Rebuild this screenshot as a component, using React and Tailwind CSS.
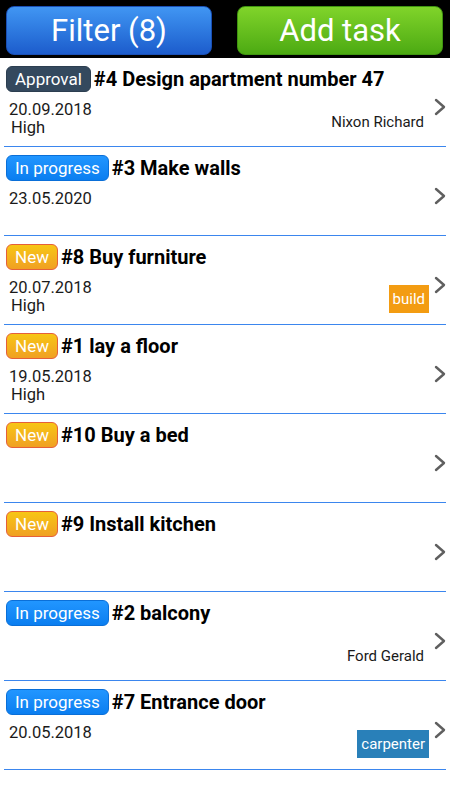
import React from 'react';

const tasks = [
  { id: 4, title: 'Design apartment number 47', status: 'Approval', date: '20.09.2018', priority: 'High', person: 'Nixon Richard' },
  { id: 3, title: 'Make walls', status: 'In progress', date: '23.05.2020' },
  { id: 8, title: 'Buy furniture', status: 'New', date: '20.07.2018', priority: 'High', tag: 'build' },
  { id: 1, title: 'lay a floor', status: 'New', date: '19.05.2018', priority: 'High' },
  { id: 10, title: 'Buy a bed', status: 'New' },
  { id: 9, title: 'Install kitchen', status: 'New' },
  { id: 2, title: 'balcony', status: 'In progress', person: 'Ford Gerald' },
  { id: 7, title: 'Entrance door', status: 'In progress', date: '20.05.2018', tag: 'carpenter' },
];

const badgeStyles = {
  Approval: 'bg-[#34495e] border border-[#2c3e50]',
  'In progress': 'bg-gradient-to-b from-[#2196ff] to-[#0a7ef0] border border-[#0a6fd8]',
  New: 'bg-gradient-to-b from-[#f7c614] to-[#f0a022] border border-[#e5603a]',
};

const tagStyles = {
  build: 'bg-[#f39c12]',
  carpenter: 'bg-[#2980b9]',
};

const Chevron = () => (
  <svg width="12" height="18" viewBox="0 0 12 18" fill="none">
    <path d="M2 2 L10 9 L2 16" stroke="#5f5f5f" strokeWidth="2.4" strokeLinecap="round" strokeLinejoin="round" />
  </svg>
);

const TaskRow = ({ task }) => (
  <div className="flex h-[89px] border-b border-[#3b86ee]">
    <div className="flex-1 flex flex-col pt-[8px] pl-[2px]">
      <div className="flex items-center h-[26px]">
        <span className={`${badgeStyles[task.status]} h-[26px] px-[8px] rounded-[6px] text-[17px] leading-none text-white flex items-center`}>
          {task.status}
        </span>
        <span className="ml-[3px] text-[20px] font-bold leading-none text-black">
          #{task.id} {task.title}
        </span>
      </div>
      <div className="flex justify-between items-start mt-[9px]">
        <div className="pl-[3px] text-[16.5px] leading-[18px] text-[#1a1a1a]">
          {task.date && <div>{task.date}</div>}
          {task.priority && <div className="ml-[2px]">{task.priority}</div>}
        </div>
        {task.person && (
          <div className="mt-[12px] pr-[5px] text-[15px] leading-[18px] text-[#1a1a1a]">{task.person}</div>
        )}
        {task.tag && (
          <div className={`${tagStyles[task.tag]} mt-[6px] h-[28px] px-[4px] flex items-center text-[15px] leading-none text-white`}>
            {task.tag}
          </div>
        )}
      </div>
    </div>
    <div className="w-[17px] flex justify-end pt-[40px]">
      <Chevron />
    </div>
  </div>
);

export default function App() {
  return (
    <div className="w-[450px] h-[800px] bg-white overflow-hidden" style={{ fontFamily: 'Roboto, "Noto Sans", sans-serif' }}>
      {/* Header buttons */}
      <div className="h-[58px] bg-black flex justify-between pl-[6px] pr-[7px] pt-[6px]">
        <button className="w-[206px] h-[49px] rounded-[8px] bg-gradient-to-b from-[#4196f3] to-[#1d5ccc] border border-[#1a4fb5] text-white text-[31px] leading-none flex items-center justify-center">
          Filter (8)
        </button>
        <button className="w-[206px] h-[49px] rounded-[8px] bg-gradient-to-b from-[#80d42a] to-[#4caa12] border border-[#3f9510] text-white text-[31px] leading-none flex items-center justify-center">
          Add task
        </button>
      </div>

      {/* Task list */}
      <div className="px-[4px]">
        {tasks.map((task) => (
          <TaskRow key={task.id} task={task} />
        ))}
      </div>
    </div>
  );
}
